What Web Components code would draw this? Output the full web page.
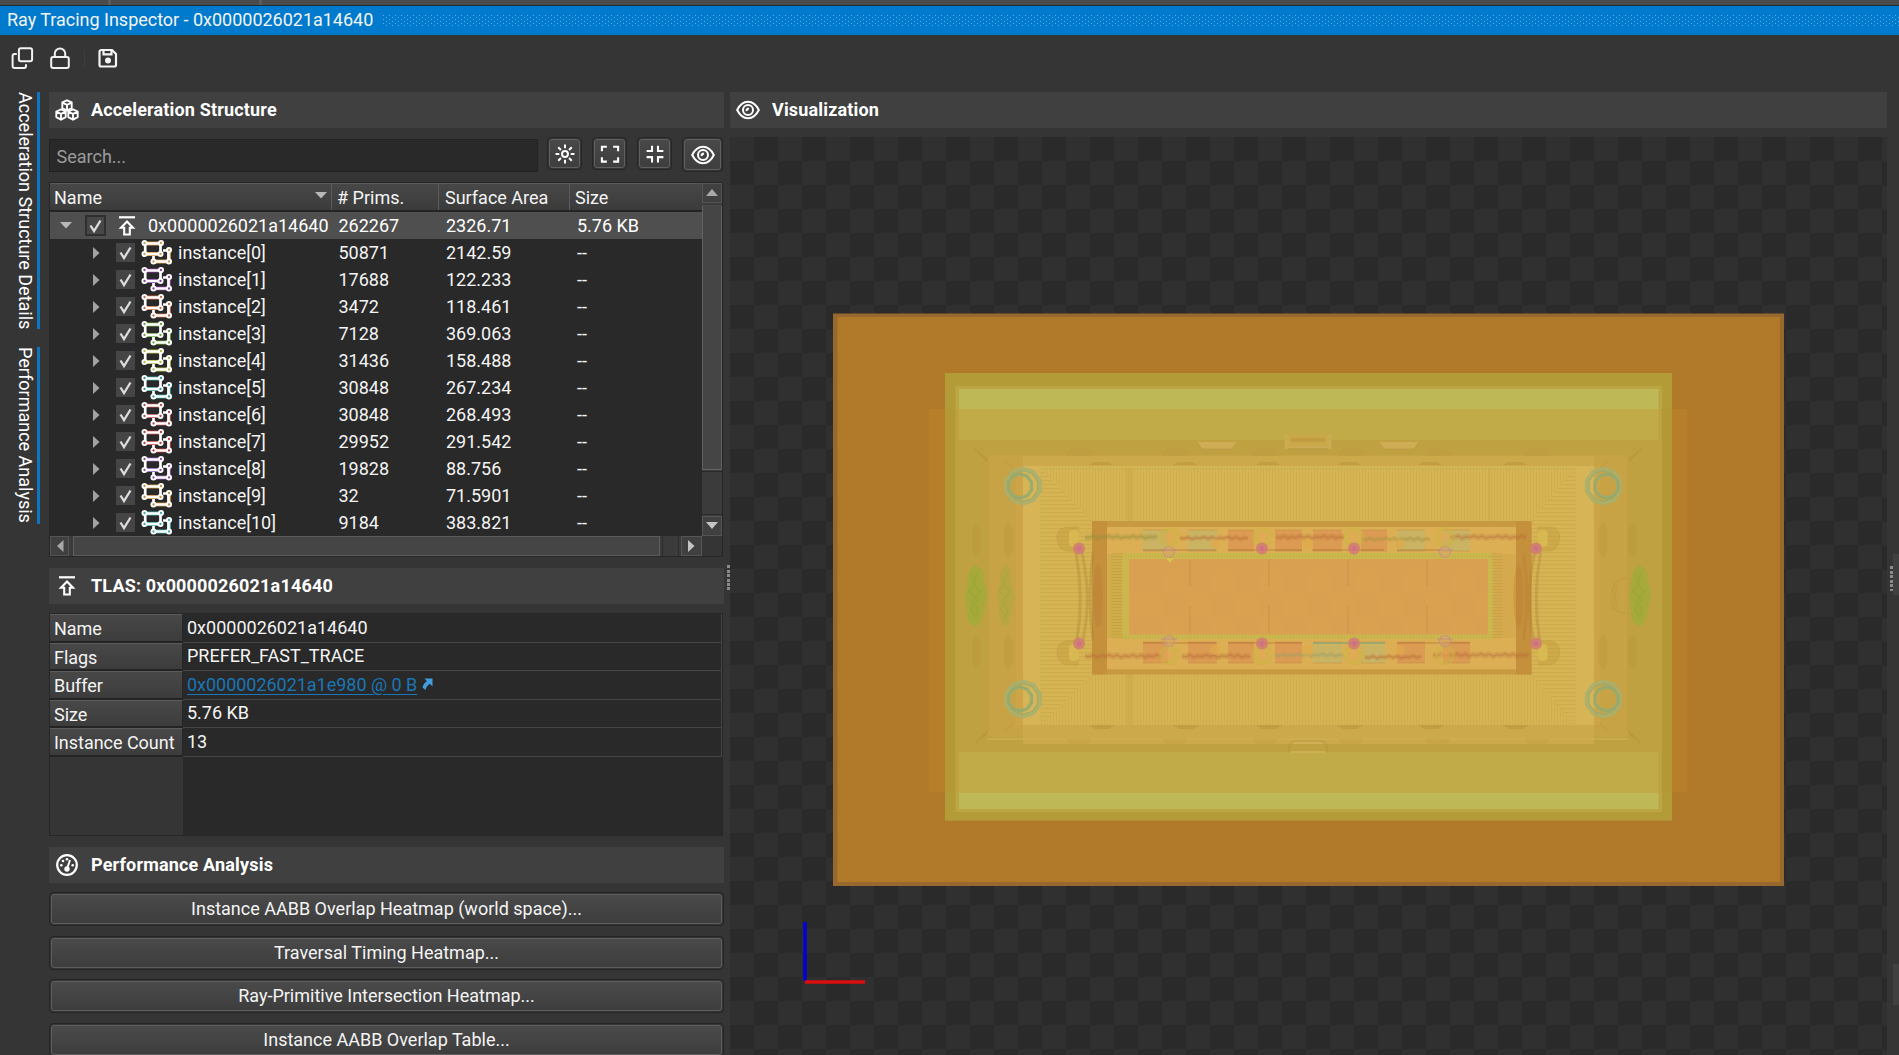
<!DOCTYPE html>
<html lang="en"><head><meta charset="utf-8"><title>Ray Tracing Inspector</title>
<style>
html,body{margin:0;height:100%;background:#353535;overflow:hidden}
body{font:18px/22px Roboto,"Liberation Sans",sans-serif;color:#f4f4f4}
</style></head><body>
<rt-app></rt-app>
<script>
const define=(name,html,init)=>customElements.define(name,class extends HTMLElement{
  connectedCallback(){
    if(this.shadowRoot)return;
    const r=this.attachShadow({mode:'open'});
    r.innerHTML='<style>*{box-sizing:border-box}</style>'+(typeof html==='function'?html(this):html);
    if(init)init(this,r);
  }
});

const eye='<g fill="none" stroke="#fff" stroke-width="2"><path d="M1.2 12C4 6.3 8 3.8 12 3.8S20 6.3 22.8 12C20 17.7 16 20.2 12 20.2S4 17.7 1.2 12Z"/><circle cx="12" cy="12" r="5"/><path d="M12 9.7A2.2 2.2 0 0 1 9.7 12" stroke-width="2.4"/></g>';
const cube=(x,y)=>`<path d="M${x} ${y-5.3}l4.7 2.1v5.6l-4.7 2.6l-4.7-2.6v-5.6zM${x-4.5} ${y-2.9}l4.5 2.1l4.5-2.1M${x} ${y-.8}v5.5"/>`;
const ICONS={
 copy:'<g fill="none" stroke="#f2f2f2" stroke-width="2"><rect x="8.9" y="2.2" width="13.2" height="13" rx="2"/><path d="M6.8 8H4.6a2 2 0 0 0-2 2v10a2 2 0 0 0 2 2H14a2 2 0 0 0 2-2v-1.8"/></g>',
 lock:'<g fill="none" stroke="#f2f2f2" stroke-width="2"><rect x="3.2" y="11" width="17.6" height="11" rx="2"/><path d="M6.8 11V7.6a5.2 5.2 0 0 1 10.4 0V11"/></g>',
 save:'<g fill="none" stroke="#f4f4f4" stroke-width="2.2"><path d="M5.3 4H16l4 4v10.700a1.800 1.800 0 0 1-1.800 1.800H5.300a1.800 1.800 0 0 1-1.800-1.800V5.800A1.800 1.800 0 0 1 5.300 4Z"/><path d="M7.500 4.300v4h8v-4"/></g><circle cx="12" cy="14.600" r="3" fill="#f4f4f4"/>',
 cubes:`<g fill="none" stroke="#fff" stroke-width="1.900" stroke-linejoin="round">${cube(12,7.6)}${cube(6,16.700)}${cube(18,16.700)}</g>`,
 eye,
 up:'<path d="M4 3.300h16" stroke="#fff" stroke-width="2.200"/><path d="M12 7.500l6 6.200h-3.200V20.500H9.200v-6.800H6Z" fill="none" stroke="#fff" stroke-width="2.100"/>',
 gauge:'<circle cx="12" cy="12" r="9.800" fill="none" stroke="#fff" stroke-width="2.200"/><path d="M12 16L15 7" stroke="#fff" stroke-width="2"/><circle cx="12" cy="16" r="2.700" fill="#fff"/><g fill="#fff"><circle cx="6.300" cy="12.300" r="1.300"/><circle cx="8" cy="8" r="1.300"/><circle cx="12" cy="6.200" r="1.300"/><circle cx="17.700" cy="12.300" r="1.300"/></g>',
 sun:'<g fill="none" stroke="#fff" stroke-width="2.200"><circle cx="12" cy="12" r="3.300"/><path d="M12 1.500v4.200M12 18.300v4.200M1.500 12h4.200M18.300 12h4.200M4.500 4.500l3 3M16.500 16.500l3 3M19.500 4.500l-3 3M7.500 16.500l-3 3"/></g>',
 expand:'<path d="M3 9V4h5.500M15.500 4H21v5M21 15.500v5h-5.500M8.500 20.500H3v-5" fill="none" stroke="#fff" stroke-width="2.300"/>',
 collapse:'<path d="M8.700 2.700v6H2.700M15.300 2.700v6h6M21.300 15.500h-6v6M2.700 15.500h6v6" fill="none" stroke="#fff" stroke-width="2.300"/>'
};
define('rt-icon',h=>`<style>:host{display:block;width:24px;height:24px;flex:none}svg{display:block}</style><svg width="24" height="24" viewBox="0 0 24 24">${ICONS[h.getAttribute('name')]}</svg>`);

define('rt-titlebar',`<style>:host{display:block}
 .strip{height:5px;background:linear-gradient(90deg,transparent 108px,#5b5b5b 108px 111px,transparent 111px 259px,#5b5b5b 259px 262px,transparent 262px),#4b4b4b}
 .bar{height:30px;background:#007acc;border-top:1px solid #17303f;display:flex;align-items:center;padding-left:7px;gap:10px;white-space:nowrap}
 .t{margin-top:-1px;letter-spacing:-.02px}
 .dots{flex:1;height:12px;margin-top:1px;background:radial-gradient(circle at .5px .5px,#5fb0ea 0 .7px,transparent .8px) 0 0/6px 4px,radial-gradient(circle at .5px .5px,#5fb0ea 0 .7px,transparent .8px) 3px 2px/6px 4px}</style>
 <div class="strip"></div><div class="bar"><span class="t"><slot></slot></span><span class="dots"></span></div>`);

define('rt-toolbar',`<style>:host{display:flex;height:57px;padding:11px 0 0 10px;align-items:flex-start}
 rt-icon+rt-icon{margin-left:14px}i{width:1px;height:17px;margin:4px 11px 0 12px;background:#3e3e3e}</style>
 <rt-icon name="copy"></rt-icon><rt-icon name="lock"></rt-icon><i></i><rt-icon name="save"></rt-icon>`);

define('rt-side-tab',`<style>:host{display:flex;writing-mode:vertical-rl;width:24px;border-right:3px solid #0d76be;white-space:nowrap;line-height:20px;padding-right:2px;color:#fff}</style><slot></slot>`);

define('rt-panel-header',h=>`<style>:host{display:flex;height:36px;background:#404040;align-items:center;gap:12px;padding-left:6px;font-weight:700;letter-spacing:.17px;color:#fff;white-space:nowrap;flex:none}
 </style><rt-icon name="${h.getAttribute('icon')}"></rt-icon><span><slot></slot></span>`);

define('rt-tool-button',h=>`<style>:host{display:flex;width:35px;height:33px;border:1px solid #262626;border-radius:4px;padding:1px;flex:none}
 :host([wide]){width:41px;height:35px}
 div{flex:1;display:flex;align-items:center;justify-content:center;border:1px solid #606060;border-radius:3px;background:linear-gradient(#484848,#3e3e3e)}
 .s{transform:scale(.9)}</style><div><rt-icon ${h.hasAttribute('wide')?'':'class="s"'} name="${h.getAttribute('icon')}"></rt-icon></div>`);

define('rt-search',`<style>:host{display:flex;height:47px;gap:10px;padding-top:9px;align-items:flex-start;flex:none}
 .f{width:489px;height:33px;margin-top:2px;background:#292929;border:1px solid #222;border-bottom-color:#1f1f1f;color:#9b9b9b;padding:6px 0 0 6.5px;margin-right:-1px}</style>
 <div class="f">Search...</div><rt-tool-button icon="sun"></rt-tool-button><rt-tool-button icon="expand"></rt-tool-button><rt-tool-button icon="collapse"></rt-tool-button><rt-tool-button icon="eye" wide></rt-tool-button>`);

const tick='<svg width="20" height="20" viewBox="0 0 20 20"><path d="M4.500 9.500L8 15L14.500 4.500" fill="none" stroke="#ddd" stroke-width="2.300"/></svg>';
const mesh=c=>{
  const n=(x,y)=>`<circle cx="${x}" cy="${y}" r="2.100" fill="${c}" stroke="#fff" stroke-width="1.900"/>`;
  return `<svg width="32" height="26" viewBox="0 0 32 26"><g fill="none"><path d="M3.500 4.500H20M3.500 15H20M12.500 22.500H28M28 10V22.500" stroke="${c}" stroke-width="3.800"/><path d="M4.200 4.500H19.500V15H4.200ZM22 11.500h5.500v11H12.500V17" stroke="#fff" stroke-width="2.700"/></g>${n(3.500,4)}${n(20,4)}${n(3.500,15)}${n(19.500,15)}${n(28,11)}${n(28,22.500)}${n(12.500,22.500)}</svg>`;
};
const ROWS=[[50871,'2142.59','#d79a4a'],[17688,'122.233','#8a3aa8'],[3472,'118.461','#c9683c'],[7128,'369.063','#67a83a'],[31436,'158.488','#b3b83c'],[30848,'267.234','#2f9a96'],[30848,'268.493','#b34848'],[29952,'291.542','#c03a3a'],[19828,'88.756','#8e4cb0'],[32,'71.5901','#c9893a'],[9184,'383.821','#3cada8']];
define('rt-tree',`<style>:host{display:grid;grid-template-columns:1fr 20px;grid-template-rows:29px 324px 20px;height:375px;border:1px solid #262626;background:#292929;width:674px;flex:none}
 .h,.r{display:grid;grid-template-columns:282px 107px 131px 132px;align-items:center;white-space:nowrap}
 .h{background:linear-gradient(#474747,#3b3b3b);border-top:1px solid #5a5a5a;border-bottom:2px solid #242424;height:29px}
 .h span{padding-left:5px;border-right:1px solid #5c5c5c;height:26px;line-height:27px;display:flex;justify-content:space-between}
 .h span:first-child{padding-left:4px}.h span:nth-child(3){padding-left:6px}
 .h span:last-child{border:0}
 .h svg{margin:8px 4px 0 0}
 .r{height:27px;line-height:27px}.r.sel{background:#4f4f4f;color:#fff}
 .r>span{padding-left:7px}.r>span:nth-child(2){padding-left:6.500px}.n{display:flex;align-items:center;height:27px;padding:0!important}
 .cb{width:19px;height:19px;background:#454545;display:flex;flex:none;align-items:center;justify-content:center}
 .sel .cb{width:21px;height:21px;border:2px solid #2f2f2f;background:#474747}
 .body{overflow:hidden}
 .body svg{flex:none}
 .vs{grid-column:2;grid-row:1/3;display:flex;flex-direction:column;background:#3b3b3b}
 .b{display:flex;align-items:center;justify-content:center;background:#404040;border:1px solid #555;flex:none;height:20px;width:20px}
 .vth{height:265px;background:#454545;border:1px solid #616161;margin-top:2px;border-top-color:#4a4a4a;border-bottom:1px solid #666}
 .sp{flex:1;border-top:1px solid #2a2a2a;border-bottom:1px solid #2a2a2a;margin:1px 0}
 .hs{display:flex;background:#3b3b3b}.hth{width:587px;border:1px solid #5c5c5c;background:#454545;margin-left:4px}
 .cor{background:#353535}</style>
 <div style="display:contents"><div class="h"><span>Name<svg width="12" height="7"><path d="M0 0h12l-6 6.500z" fill="#b8b8b8"/></svg></span><span># Prims.</span><span>Surface Area</span><span>Size</span></div>
 <div class="vs"><div class="b"><svg width="12" height="8"><path d="M0 7h12L6 0z" fill="#a8a8a8"/></svg></div><div class="vth"></div><div class="sp"></div><div class="b"><svg width="12" height="8"><path d="M0 0h12L6 7z" fill="#c4c4c4"/></svg></div></div>
 <div class="body">
 <div class="r sel"><span class="n"><svg width="12" height="7" style="margin:0 13px 0 10px"><path d="M0 0h12l-6 6.500z" fill="#b8b8b8"/></svg><span class="cb">${tick}</span><rt-icon name="up" style="margin:0 9px 0 9px"></rt-icon>0x0000026021a14640</span><span>262267</span><span>2326.71</span><span>5.76 KB</span></div>
 ${ROWS.map((x,i)=>`<div class="r"><span class="n"><svg width="8" height="12" style="margin:0 15px 0 43px"><path d="M0 0v12l6.500-6z" fill="#a2a2a2"/></svg><span class="cb">${tick}</span><span style="display:flex;margin:-2px 5px 0 6px">${mesh(x[2])}</span>instance[${i}]</span><span>${x[0]}</span><span>${x[1]}</span><span>--</span></div>`).join('')}
 </div>
 <div class="hs"><div class="b" style="width:19px;padding-left:2px"><svg width="7" height="12"><path d="M6.500 0v12L0 6z" fill="#a8a8a8"/></svg></div><div class="hth"></div><div style="width:17px;margin:0 2px;border:1px solid #2d2d2d;border-width:0 1px"></div><div class="b" style="width:21px"><svg width="7" height="12"><path d="M0 0v12l6.500-6z" fill="#c4c4c4"/></svg></div></div><div class="cor"></div></div>`);

define('rt-properties',`<style>:host{display:block;width:674px;height:223px;background:linear-gradient(90deg,#353535 133px,#292929 133px);border:1px solid #262626;flex:none}
 .g{display:grid;grid-template-columns:133px 539px;grid-template-rows:repeat(5,28.5px)}
 .l{background:linear-gradient(#484848,#3c3c3c);border-top:1px solid #5c5c5c;border-bottom:2px solid #242424;border-right:1px solid #262626;padding:0 0 0 4px;line-height:27px;white-space:nowrap;letter-spacing:-.03px}
 .v{border-bottom:1px solid #454545;border-right:1px solid #454545;padding-left:4px;line-height:26px;display:flex;align-items:center}
 a{color:#1a76b6;text-decoration:underline;text-underline-offset:3px;text-decoration-thickness:1px;letter-spacing:-.03px}svg{margin:0 0 2px 5px}</style>
 <div class="g"><div class="l">Name</div><div class="v">0x0000026021a14640</div><div class="l">Flags</div><div class="v">PREFER_FAST_TRACE</div>
 <div class="l">Buffer</div><div class="v"><a>0x0000026021a1e980 @ 0 B</a><svg width="11" height="12"><path d="M2.500.500H10.500V8.500L7.800 5.800C5 7.800 4 9.500 3.500 12L.500 9.500C1 6.500 3 4.500 5 3.200Z" fill="#3f9fe0"/></svg></div>
 <div class="l">Size</div><div class="v">5.76 KB</div><div class="l">Instance Count</div><div class="v">13</div></div>`);

define('rt-button',`<style>:host{display:flex;height:34px;width:675px;border:1px solid #252525;border-radius:4px;padding:1px;flex:none}
 div{flex:1;border:1px solid #5e5e5e;border-radius:3px;background:linear-gradient(#4a4a4a,#3d3d3d);text-align:center;line-height:27px}</style><div><slot></slot></div>`);

define('rt-viewport',()=>{
  const R=(x,y,x2,y2,f,o=1)=>`<rect x="${x}" y="${y}" width="${x2-x}" height="${y2-y}" fill="${f}" opacity="${o}"/>`;
  const cx=1308.300, m=x=>2*cx-x;
  let s='';
  s+=R(833,313.500,1784,886,'#97692f')+R(837.500,317,1780,882,'#b17a2a');
  s+=R(929,409,1687,792.500,'#b87f2b');
  s+=R(945,373,1672,820.700,'#b39b38')+R(955.500,386,1662,812,'#bba643')+R(959,389,1658.500,809,'#beb956');
  s+=R(945,409,955.500,792.500,'#b49836')+R(1662,409,1672,792.500,'#b49836');
  s+=R(955.500,409,1662,792.500,'#bea241')+R(959,409,1658.500,792.500,'#c1ab48');
  s+=R(959,440,1658.500,752,'#c0a142')+R(989,455,1627,737,'#c7a345');
  s+=R(1016,466,1600,725,'#cda548')+R(1023,456,1594,744,'#cca94b')+R(1023,466,1594,725,'#d7b557')+R(1041,466,1575,725,'#d6b454');
  s+='<path d="M987 739H1628" stroke="#d1b457"/><path d="M1041 468V725M1575 468V725M1041 469H1575" stroke="#b7b451" opacity=".4"/>';
  s+='<path d="M1041 468L1092 521H1531L1575 468Z M1041 725L1092 674H1531L1575 725Z" fill="url(#vs)"/><path d="M1041 468L1092 521V674L1041 725ZM1575 468L1531 521V674L1575 725Z" fill="url(#hs)"/>';
  s+=R(1126,468,1133,521,'#c8a545',.4)+R(1488,468,1490,521,'#c8a545',.4)+R(1126,674,1133,725,'#c8a545',.4);
  /* wall recesses */
  for(const x of [1079,1175,1265,1351,1437,1537]){s+=`<path d="M${x-13} 456l4-8h18l6 8zM${x-13} 738h26l-4 7h-18z" fill="#b78e36" opacity=".18"/>`}
  for(const x of [1101,1185,1268,1349,1430,1515]){s+=`<path d="M${x-12} 465l5-3h14l5 3zM${x-12} 725h26l-6 4h-14z" fill="#a67f30" opacity=".28"/>`}
  for(const [x,w] of [[1217,18],[1399,18]])s+=`<path d="M${x-w-2} 442l5 7h${2*w-6}l5-7" fill="#cfad55" stroke="#a98835" stroke-opacity=".3"/>`;
  s+='<path d="M1286 434V448H1330V434" fill="#c9a84a" stroke="#d1b05a" stroke-opacity=".6" stroke-width="3"/><path d="M1291 438h34v4h-34z" fill="#c1963c" opacity=".7"/><path d="M1288 449h40" stroke="#a5852f" opacity=".5"/><path d="M1289 753v-8q2-4 6-4h26q5 0 6 4v8" fill="none" stroke="#a98432" opacity=".45"/><path d="M1294 743h28M1291 752h34" stroke="#d3b35c" stroke-width="1.500"/>';
  s+='<path d="M974 448L986 458L987 462ZM1642 448L1630 458L1629 462ZM974 745L986 735L987 731ZM1642 745L1630 735L1629 731ZM1005 461l9 7M1608 461l-8 7M1014 723l-9 8M1600 723l8 8" fill="#a9862f" stroke="#a9862f" opacity=".3"/>';
  for(const y of [540,652])for(const x of [975,1007,1604,1634]){const d=x<1300?1:-1;s+=`<path d="M${x} ${y-18}l${6*d} 6v24l${-6*d} 6l${-3*d}-6v-24z" fill="#b48a34" opacity=".2"/>`}
  /* gallery frame and courtyard */
  s+=R(1092,521,1531.500,674.500,'#c79940')+R(1092,521,1107,674.500,'#c38a38',.6)+R(1516,521,1531.500,674.500,'#c38a38',.6)+R(1107,527,1516,669.300,'#dcaf54');
  s+=R(1107,554,1123,638,'#cdab49',.8)+R(1492,554,1516,638,'#d2a64b',.7);
  s+=R(1122,553,1493,639,'#cbb74e')+'<path d="M1122 556H1493M1122 637H1493" stroke="#b3a53e" stroke-width="4" stroke-dasharray="1 2" opacity=".3"/><path d="M1117 553V639M1497 553V639" stroke="#a98b36" stroke-width="11" stroke-dasharray="1 2" opacity=".25"/>';
  s+=R(1129,559,1488,634.500,'#d9a052');
  for(let i=0;i<15;i++)for(let j=0;j<3;j++)if((i+j)%2)s+=R(1138+24*i-(i?0:8),569+24*j,Math.min(1488,1162+24*i),Math.min(634,593+24*j),'#dda250',.4);
  s+='<path d="M1190 560v26M1190 606v27M1269 560v26M1269 606v27M1348 560v26M1348 606v27M1427 560v26M1427 606v27" stroke="#b7813d" opacity=".4"/>';
  const cloth=(xs,y,col)=>xs.map(([a,b])=>`<rect x="${a}" y="${y}" width="${b-a}" height="21" fill="${col}" opacity=".5"/><path d="M${a} ${y+21}H${b}M${a} ${y}H${b}" stroke="#a56f34" opacity=".25"/>`).join('');
  s+=cloth([[1228,1254],[1275,1302],[1313,1342],[1361,1387]],530,'#dc8850')+cloth([[1143,1168],[1188,1217],[1397,1425],[1443,1470]],530,'#b7b872');
  s+=cloth([[1143,1168],[1188,1217],[1228,1254],[1275,1302],[1397,1425],[1443,1470]],642,'#dc8850')+cloth([[1313,1342],[1361,1385]],642,'#b7b872');
  const wig=(a,b,y,c,w=3)=>{let p=`M${a} ${y}`;for(let x=a+4,i=0;x<b;x+=4,i++)p+=`L${x} ${y+[.8,-.9,1.200,-.3,.5,-1.100][i%6]}`;return `<path d="${p}" fill="none" stroke="${c}" stroke-width="${w+1.500}" opacity=".25"/><path d="${p}" fill="none" stroke="${c}" stroke-width="1.500" opacity=".45"/>`};
  s+=wig(1085,1160,537,'#94913f',4)+wig(1180,1250,538,'#b9703a')+wig(1276,1345,537,'#b9703a',4)+wig(1362,1432,539,'#a99545')+wig(1450,1530,537,'#b9703a',4);
  s+=wig(1085,1165,656,'#b9703a',4)+wig(1182,1252,656,'#b9703a',4)+wig(1275,1345,655,'#9fa065')+wig(1365,1425,657,'#b9703a')+wig(1433,1530,655,'#b9703a',4);
  s+='<path d="M1143 550H1216M1228 550H1302M1312 550H1384M1397 550H1440M1143 643H1216M1228 643H1302M1397 643H1470" stroke="#a4682f" stroke-width="1.500" opacity=".4"/><path d="M1313 643H1385" stroke="#8fa471" stroke-width="2" opacity=".7"/>';
  for(const x of [1169,1262,1354,1445])for(const y of [537,655])s+=`<circle cx="${x}" cy="${y}" r="8" fill="none" stroke="#ccb443" stroke-width="5" opacity=".45"/><circle cx="${x}" cy="${y}" r="5" fill="#e1a855" opacity=".6"/>`;
  for(const x of [1215,1308,1400])for(const y of [544,650])s+=`<circle cx="${x}" cy="${y}" r="5" fill="#e0a94a" opacity=".7"/>`;
  /* corner columns and draped ends */
  for(const x of [1069,m(1069)])for(const y of [539,653]){const d=x<cx?1:-1;s+=`<path d="M${x+10*d} ${y-12}h${-13*d}q${-10*d} 2 ${-9*d} 12t${9*d} 12h${13*d}" fill="#c79f42" opacity=".5" stroke="#a8832f" stroke-opacity=".4"/><rect x="${x+5*d-5}" y="${y-9}" width="10" height="17" rx="4" fill="#d8b851"/>`}
  for(const f of [x=>x,m])s+=`<path d="M${f(1076)} 553Q${f(1084)} 597 ${f(1077)} 640M${f(1082)} 553Q${f(1092)} 597 ${f(1083)} 640M${f(1093)} 553Q${f(1087)} 597 ${f(1093)} 640" fill="none" stroke="#ad8233" stroke-width="3" opacity=".35"/><ellipse cx="${f(1098)}" cy="596" rx="5" ry="32" fill="#b67b35" opacity=".3"/>`;
  for(const x of [1079,1262,1354,1536])for(const y of [548.500,643.500])s+=`<circle cx="${x}" cy="${y}" r="6" fill="#d17a73" opacity=".85"/><circle cx="${x}" cy="${y}" r="2.500" fill="#cf7186"/>`;
  for(const x of [1169,1445])for(const y of [552,641])s+=`<circle cx="${x}" cy="${y}" r="5.500" fill="#d9a36d" fill-opacity=".5" stroke="#c79579" stroke-width="1.200"/><path d="M${x-8} ${y-2}h16" stroke="#b7848b" opacity=".6"/>`;
  s+='<path d="M1166 558l4 5l4-5z" fill="#d8c34e"/>';
  /* corner planters */
  const oct=(x,y,r)=>{let p='';for(let i=0;i<10;i++)p+=`${(x+r*Math.cos(Math.PI*(i*36+18)/180)).toFixed(1)},${(y+r*Math.sin(Math.PI*(i*36+18)/180)).toFixed(1)} `;return p};
  for(const x of [1023,1603.500])for(const y of [486,699]){const q=x<cx?-3:3;s+=`<g opacity=".85"><polygon points="${oct(x,y,17)}" fill="none" stroke="#adb06a" stroke-width="4.500"/><polygon points="${oct(x,y,19)}" fill="none" stroke="#a4b175" stroke-width="1"/><polygon points="${oct(x,y,15.500)}" fill="none" stroke="#95ab72" stroke-width="1.200"/><polygon points="${oct(x+q,y,12)}" fill="none" stroke="#9bad70" stroke-width="3.500"/><polygon points="${oct(x+q,y,12.500)}" fill="none" stroke="#86a873" stroke-width="1"/></g>`}
  /* foliage */
  for(const [x,w,o] of [[975,10,.7],[1005,7.500,.35],[1639,10,.7]]){
    s+=`<path d="M${x} 565q${w} 4 ${w-2} 14l3 10l1 8l-2 8l-2 10q-3 11 ${-w+3} 11q${-w} 0 ${-w+1}-16l-2-14l2-12q1-17 ${w-1}-19z" fill="#9cad38" opacity="${o}"/><path d="M${x-5} 574l5 9l-6 8l9 9l-8 9l6 8M${x+3} 572l-5 11l7 9l-8 10l6 8l-3 9" fill="none" stroke="#8aa536" stroke-width="1.500" opacity="${o*.6}"/>`}
  s+='<path d="M1627 578q-14 0-16 18t16 17M1618 583q-5 13 0 26M1614 581v29" fill="none" stroke="#b1893b" opacity=".35"/>';
  s+='<path d="M805 922V981" stroke="#0000dc" stroke-width="3.500"/><path d="M805 982H865" stroke="#dc0e0e" stroke-width="3.700"/>';
  return `<style>:host{display:block;flex:1;min-height:0;overflow:hidden;background:conic-gradient(#2a2a2a 25%,#303030 0 50%,#2a2a2a 0 75%,#303030 0) 0 0/48px 48px}svg{display:block}</style>
  <svg width="1157" height="918" viewBox="730 137 1157 918"><defs><pattern id="vs" width="3" height="8" patternUnits="userSpaceOnUse"><rect width="1" height="8" fill="#b18f35" opacity=".17"/></pattern><pattern id="hs" width="8" height="4" patternUnits="userSpaceOnUse"><rect width="8" height="1" fill="#a98b33" opacity=".22"/></pattern></defs>${s}</svg>`;
});

define('rt-grip',`<style>:host{display:block;width:3px;height:25px;background:repeating-linear-gradient(#8a8a8a 0 3px,transparent 3px 4.500px)}</style>`);

define('rt-app',`<style>:host{display:flex;flex-direction:column;width:1899px;height:1055px;overflow:hidden;background:#353535}
 main{display:flex;flex:1;min-height:0}
 nav{width:49px;display:flex;flex-direction:column;align-items:flex-start;padding-left:16px;gap:18px}
 .left{width:675px;display:flex;flex-direction:column}
 .split{width:6px;display:flex;padding:473px 0 0 3px}
 .right{width:1157px;display:flex;flex-direction:column}
 .right rt-viewport{margin-top:9px}
 .edge{flex:1;display:flex;flex-direction:column;align-items:flex-start}
 .edge .a{height:41px;margin-top:462px;padding:12px 0 0 3px;width:100%;background:linear-gradient(90deg,transparent 6px,#404040 6px)}
 .edge .b{height:41px;margin:369px 0 0 6px;width:6px;background:#404040}
 rt-button{margin-bottom:9.600px}</style>
 <rt-titlebar>Ray Tracing Inspector - 0x0000026021a14640</rt-titlebar>
 <rt-toolbar></rt-toolbar>
 <main>
  <nav><rt-side-tab style="height:237px">Acceleration Structure Details</rt-side-tab><rt-side-tab style="height:177px">Performance Analysis</rt-side-tab></nav>
  <section class="left">
   <rt-panel-header icon="cubes">Acceleration Structure</rt-panel-header>
   <rt-search style="height:47px;box-sizing:border-box"></rt-search>
   <rt-tree style="margin-top:7px;height:375px;box-sizing:border-box"></rt-tree>
   <rt-panel-header icon="up" style="margin:11px 0 9px">TLAS: 0x0000026021a14640</rt-panel-header>
   <rt-properties style="height:223px;box-sizing:border-box"></rt-properties>
   <rt-panel-header icon="gauge" style="margin:11px 0 9px">Performance Analysis</rt-panel-header>
   <rt-button>Instance AABB Overlap Heatmap (world space)...</rt-button>
   <rt-button>Traversal Timing Heatmap...</rt-button>
   <rt-button>Ray-Primitive Intersection Heatmap...</rt-button>
   <rt-button>Instance AABB Overlap Table...</rt-button>
  </section>
  <div class="split"><rt-grip></rt-grip></div>
  <section class="right"><rt-panel-header icon="eye">Visualization</rt-panel-header><rt-viewport></rt-viewport></section>
  <div class="edge"><div class="a"><rt-grip></rt-grip></div><div class="b"></div></div>
 </main>`);
</script></body></html>
